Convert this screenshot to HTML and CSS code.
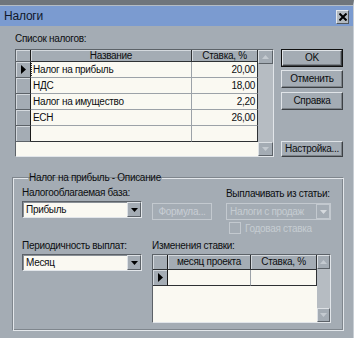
FILE: index.html
```html
<!DOCTYPE html>
<html>
<head>
<meta charset="utf-8">
<link rel="stylesheet" href="styles.css">
</head>
<body>
<div class="window">
  <div class="titlebar">
    <span class="title">Налоги</span>
    <span class="close"><svg width="8" height="8" viewBox="0 0 8 8"><path d="M0.5 0.5 L7.5 7.5 M7.5 0.5 L0.5 7.5" stroke="#000" stroke-width="2"/></svg></span>
  </div>
  <div class="content">
    <div class="lbl list-lbl">Список налогов:</div>
    <div class="top-row">
      <div class="grid g1">
        <div class="gdata">
          <div class="grow head">
            <div class="c ind"></div>
            <div class="c name">Название</div>
            <div class="c rate">Ставка, %</div>
          </div>
          <div class="grow">
            <div class="c ind"><svg width="5" height="9" viewBox="0 0 5 9"><path d="M0 0 L5 4.5 L0 9 Z" fill="#000"/></svg></div>
            <div class="c name"><span class="focus">Налог на прибыль</span></div>
            <div class="c rate">20,00</div>
          </div>
          <div class="grow">
            <div class="c ind"></div>
            <div class="c name">НДС</div>
            <div class="c rate">18,00</div>
          </div>
          <div class="grow">
            <div class="c ind"></div>
            <div class="c name">Налог на имущество</div>
            <div class="c rate">2,20</div>
          </div>
          <div class="grow">
            <div class="c ind"></div>
            <div class="c name">ЕСН</div>
            <div class="c rate">26,00</div>
          </div>
          <div class="grow last">
            <div class="c ind"></div>
            <div class="c name"></div>
            <div class="c rate"></div>
          </div>
        </div>
        <div class="vscroll">
          <div class="sbtn"><svg width="7" height="4" viewBox="0 0 7 4"><path d="M0 4 L3.5 0 L7 4 Z" fill="#c4cad0"/></svg></div>
          <div class="strack"></div>
          <div class="sbtn"><svg width="7" height="4" viewBox="0 0 7 4"><path d="M0 0 L3.5 4 L7 0 Z" fill="#c4cad0"/></svg></div>
        </div>
      </div>
      <div class="btncol">
        <div class="btn default">OK</div>
        <div class="btn b2">Отменить</div>
        <div class="btn b3">Справка</div>
        <div class="btn b4">Настройка...</div>
      </div>
    </div>

    <fieldset class="group">
      <legend>Налог на прибыль - Описание</legend>
      <div class="row-a">
        <div class="col1">
          <div class="lbl">Налогооблагаемая база:</div>
          <div class="combo"><span class="ctext">Прибыль</span><span class="cbtn"><svg width="7" height="4" viewBox="0 0 7 4"><path d="M0 0 L3.5 4 L7 0 Z" fill="#000"/></svg></span></div>
        </div>
        <div class="col2">
          <div class="btn disabled formula">Формула...</div>
        </div>
        <div class="col3">
          <div class="lbl">Выплачивать из статьи:</div>
          <div class="combo dis"><span class="ctext">Налоги с продаж</span><span class="cbtn"><svg width="7" height="4" viewBox="0 0 7 4"><path d="M0 0 L3.5 4 L7 0 Z" fill="#d6dade"/></svg></span></div>
        </div>
      </div>
      <div class="row-b">
        <span class="chk"></span><span class="chk-lbl">Годовая ставка</span>
      </div>
      <div class="row-c">
        <div class="col1">
          <div class="lbl">Периодичность выплат:</div>
          <div class="combo"><span class="ctext">Месяц</span><span class="cbtn"><svg width="7" height="4" viewBox="0 0 7 4"><path d="M0 0 L3.5 4 L7 0 Z" fill="#000"/></svg></span></div>
        </div>
        <div class="col4">
          <div class="lbl">Изменения ставки:</div>
          <div class="grid g2">
            <div class="gdata">
              <div class="grow head">
                <div class="c ind"></div>
                <div class="c month">месяц проекта</div>
                <div class="c rate">Ставка, %</div>
              </div>
              <div class="grow last">
                <div class="c ind"><svg width="5" height="9" viewBox="0 0 5 9"><path d="M0 0 L5 4.5 L0 9 Z" fill="#000"/></svg></div>
                <div class="c month"></div>
                <div class="c rate"></div>
              </div>
            </div>
            <div class="vscroll">
              <div class="sbtn"><svg width="7" height="4" viewBox="0 0 7 4"><path d="M0 4 L3.5 0 L7 4 Z" fill="#c4cad0"/></svg></div>
              <div class="strack"></div>
              <div class="sbtn"><svg width="7" height="4" viewBox="0 0 7 4"><path d="M0 0 L3.5 4 L7 0 Z" fill="#c4cad0"/></svg></div>
            </div>
          </div>
        </div>
      </div>
    </fieldset>
  </div>
</div>
</body>
</html>
```

FILE: styles.css
```css
* { box-sizing: border-box; }
html, body { margin: 0; padding: 0; }
body {
  width: 354px;
  height: 338px;
  overflow: hidden;
  background: #a4acb4;
  font-family: "Liberation Sans", Arial, sans-serif;
  font-size: 10px;
  letter-spacing: -0.3px;
  color: #0c0e10;
}
.window {
  width: 354px;
  height: 338px;
  background: #a4acb4;
  border-top: 5px solid #6f757b;
  border-right: 1px solid #c8ced4;
  display: flex;
  flex-direction: column;
}
.titlebar {
  height: 21px;
  border-top: 1px solid #b4bcc4;
  background: #7b9bd0;
  display: flex;
  align-items: center;
  justify-content: space-between;
  padding: 0 4px 0 4px;
}
.title { font-size: 12px; letter-spacing: -0.2px; color: #10182a; }
.close {
  width: 13px;
  height: 14px;
  margin-top: 1px;
  background: #b2b9c0;
  border: 1px solid;
  border-color: #e6eaee #50565c #50565c #e6eaee;
  display: flex;
  align-items: center;
  justify-content: center;
}
.content { padding: 0 10px 0 13px; }
.lbl { height: 13px; line-height: 13px; white-space: nowrap; }
.list-lbl { margin-top: 6px; margin-left: 2px; }
.top-row { display: flex; margin-top: 4px; margin-left: 2px; }

.grid {
  display: flex;
  background: #faf9f2;
  border: 1px solid;
  border-color: #5c6268 #e2e6ea #e2e6ea #5c6268;
}
.g1 { width: 259px; height: 108px; }
.gdata { flex: 1; display: flex; flex-direction: column; }
.grow { display: flex; height: 16px; }
.grow.head { height: 12px; }
.c {
  height: 100%;
  line-height: 15px;
  padding: 0 2px;
  white-space: nowrap;
  overflow: hidden;
  border-right: 1px solid #9ca2a8;
  border-bottom: 1px solid #9ca2a8;
}
.grow.last .c { border-bottom-color: #2e3134; }
.grow .c.ind {
  width: 15px;
  background: #a4acb4;
  border-right: 1px solid #1a1a1a;
  border-bottom: 1px solid #5c6268;
  box-shadow: inset 1px 1px #d4d9de;
  display: flex;
  align-items: center;
  justify-content: center;
  padding: 0;
}
.head .c {
  background: #a4acb4;
  border-right-color: #2e3134;
  border-bottom-color: #2e3134;
  box-shadow: inset 1px 1px #d4d9de;
  text-align: center;
  line-height: 11px;
}
.g1 .name { width: 161px; }
.g1 .rate { width: 66px; text-align: right; border-right-color: #2e3134; }
.g1 .head .rate { text-align: center; }
.focus { outline: 1px dotted #333; outline-offset: 0; display: block; margin: 0 -2px 0 -1px; padding-left: 1px; height: 15px; }
.vscroll {
  width: 15px;
  display: flex;
  flex-direction: column;
  background: #b8bec4;
}
.sbtn {
  height: 14px;
  background: #a4acb4;
  border: 1px solid;
  border-color: #dde1e5 #5c6268 #5c6268 #dde1e5;
  display: flex;
  align-items: center;
  justify-content: center;
}
.strack { flex: 1; background: #b6bcc2; }

.btncol { width: 62px; margin-left: 7px; display: flex; flex-direction: column; }
.btn {
  height: 18px;
  line-height: 16px;
  text-align: center;
  background: #a4acb4;
  border: 1px solid;
  border-color: #e0e4e8 #3c4044 #3c4044 #e0e4e8;
  box-shadow: inset -1px -1px #7c8288;
  white-space: nowrap;
}
.btn.default { outline: 1px solid #111; outline-offset: -1px; border-width: 2px; line-height: 14px; }
.b2 { margin-top: 3px; }
.b3 { margin-top: 4px; }
.b4 { margin-top: 31px; height: 16px; line-height: 14px; }

.group {
  margin: 15px 0 0 0;
  width: 331px;
  height: 159px;
  padding: 0 0 0 8px;
  border: 1px solid #e3e7eb;
  box-shadow: -1px -1px 0 #7f868d, inset -1px -1px 0 #7f868d;
}
.group legend { padding: 0 1px; margin-left: 6px; line-height: 12px; }
.row-a { display: flex; margin-top: 2px; }
.col1 { width: 120px; display: flex; flex-direction: column; }
.col1 .lbl { margin-bottom: 2px; }
.combo {
  height: 17px;
  display: flex;
  align-items: center;
  background: #faf9f2;
  border: 1px solid;
  border-color: #5c6268 #e2e6ea #e2e6ea #5c6268;
  box-shadow: inset 1px 1px #8a9096;
}
.ctext { flex: 1; padding-left: 3px; line-height: 15px; }
.cbtn {
  width: 14px;
  height: 15px;
  background: #a4acb4;
  border: 1px solid;
  border-color: #dde1e5 #5c6268 #5c6268 #dde1e5;
  display: flex;
  align-items: center;
  justify-content: center;
}
.combo.dis { background: #a4acb4; box-shadow: none; border-color: #c3c9cf; }
.combo.dis .ctext { color: #c6ccd2; }
.combo.dis .cbtn { border-color: #c3c9cf; }
.col2 { width: 60px; margin-left: 10px; display: flex; flex-direction: column; justify-content: flex-end; }
.btn.disabled { color: #c8ced4; border-color: #c3c9cf; box-shadow: none; height: 17px; }
.col3 { width: 105px; margin-left: 14px; display: flex; flex-direction: column; }
.col3 .lbl { margin-bottom: 3px; margin-top: 1px; }
.row-b { display: flex; align-items: center; margin-left: 207px; margin-top: 2px; height: 12px; }
.chk { width: 12px; height: 12px; border: 1px solid #c3c9cf; }
.chk-lbl { margin-left: 4px; color: #c6ccd2; }
.row-c { display: flex; margin-top: 5px; }
.col4 { width: 179px; margin-left: 10px; display: flex; flex-direction: column; }
.col4 .lbl { margin-bottom: 2px; }
.g2 { width: 179px; height: 69px; }
.g2 .grow.head { height: 15px; }
.g2 .head .c { line-height: 14px; }
.g2 .month { width: 83px; }
.g2 .rate { width: 66px; border-right-color: #2e3134; }
.g2 .grow .c.ind { border-bottom-color: #2e3134; }
```
